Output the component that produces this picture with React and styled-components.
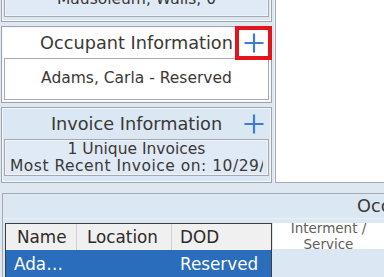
import React from 'react';
import styled, { createGlobalStyle } from 'styled-components';

const GlobalStyle = createGlobalStyle`
  *, *::before, *::after { box-sizing: border-box; }
  html, body { margin: 0; padding: 0; }
  body {
    background: #dfe7f0;
    font-family: "DejaVu Sans", "Liberation Sans", sans-serif;
    color: #3b3835;
    overflow: hidden;
  }
`;

const Screen = styled.div`
  width: 384px;
  height: 277px;
  overflow: hidden;
  display: flex;
  flex-direction: column;
  background: #dfe7f0;
`;

const TopArea = styled.div`
  flex: none;
  height: 193px;
  display: flex;
  overflow: hidden;
`;

const LeftCol = styled.div`
  flex: none;
  width: 272px;
  padding-left: 1px;
  display: flex;
  flex-direction: column;
  gap: 4px;
`;

const Card = styled.section`
  flex: none;
  border: 1px solid #9da4ac;
  box-shadow: inset 0 0 0 1px #f3f6fa;
  background: ${p => (p.$white ? '#ffffff' : '#dce7f4')};
  padding: 0 2px ${p => p.$pb}px 2px;
  margin-top: ${p => p.$mt || 0}px;
`;

const TitleRow = styled.div`
  height: 31px;
  display: grid;
  grid-template-columns: 1fr auto 1fr;
  align-items: center;
`;

const Title = styled.h2`
  grid-column: 2;
  margin: 0;
  font-weight: normal;
  font-size: 17.7px;
  white-space: nowrap;
  color: #3b3835;
`;

const PlusButton = styled.button`
  grid-column: 3;
  justify-self: end;
  width: 29px;
  height: 26px;
  margin-right: 1px;
  padding: 0;
  border: none;
  background: transparent;
  display: flex;
  align-items: center;
  justify-content: center;
  outline: ${p => (p.$highlight ? '4px solid #e5141c' : 'none')};
  outline-offset: 0;
`;

const InnerBox = styled.div`
  border: 1px solid #a7a9ac;
  box-shadow: inset 0 0 0 1px ${p => (p.$white ? '#ffffff' : '#eef3f9')};
  background: ${p => (p.$white ? '#ffffff' : '#e0eaf6')};
  height: ${p => p.$h}px;
  padding: ${p => p.$pad};
  display: flex;
  flex-direction: column;
  justify-content: ${p => p.$justify || 'center'};
  overflow: hidden;
`;

const Line = styled.div`
  font-size: 15.5px;
  line-height: ${p => p.$lh || 18}px;
  letter-spacing: ${p => p.$ls || 0}px;
  text-align: center;
  white-space: nowrap;
  overflow: hidden;
  color: #3b3835;
`;

const RightPanel = styled.div`
  flex: none;
  width: 109px;
  height: 183px;
  margin-left: 3px;
  background: #ffffff;
  border: 1px solid #a3aab2;
  border-top: none;
  border-right: none;
  box-shadow: -1px 0 0 #eef2f6;
`;

const BottomPanel = styled.div`
  flex: 1;
  margin-left: 2px;
  border-top: 1px solid #a3aab2;
  border-left: 1px solid #a3aab2;
  background: #dce7f4;
  display: flex;
  flex-direction: column;
`;

const PanelHeader = styled.div`
  height: 25px;
  padding-left: 354px;
  display: flex;
  align-items: center;
  font-size: 17.7px;
  white-space: nowrap;
  overflow: hidden;
  border-bottom: 1px solid #e9eff7;
`;

const GridRow = styled.div`
  margin-top: 4px;
  padding-left: 2px;
  display: flex;
  align-items: flex-start;
`;

const Table = styled.div`
  flex: none;
  width: 267px;
  border: 1px solid #3e3e3e;
  border-bottom: none;
  background: #ffffff;
`;

const Row = styled.div`
  display: grid;
  grid-template-columns: 71px 95px 1fr;
  height: ${p => p.$h}px;
  background: ${p => (p.$selected ? '#2a6dbd' : '#f0f0f0')};
  color: ${p => (p.$selected ? '#ffffff' : '#2e2b28')};
`;

const Cell = styled.div`
  display: flex;
  align-items: center;
  padding: 0 8px 0 ${p => p.$pl}px;
  font-size: 16.8px;
  white-space: nowrap;
  overflow: hidden;
  border-right: ${p => (p.$sep ? '1px solid #d2d2d2' : 'none')};
  min-width: 0;
`;

const Ellipsis = styled.span`
  overflow: hidden;
  text-overflow: ellipsis;
  white-space: nowrap;
`;

const ColumnHead = styled.div`
  flex: 1;
  margin-left: 1px;
  height: 26px;
  background: #ffffff;
  overflow: hidden;
  display: flex;
  flex-direction: column;
  align-items: center;
`;

const HeadText = styled.div`
  margin-top: -3px;
  font-size: 13.5px;
  line-height: 16px;
  color: #615e5a;
  text-align: center;
`;

const Plus = () => (
  <svg width="20" height="20" viewBox="0 0 20 20">
    <path d="M10 0.5V19.5M0.5 10H19.5" stroke="#3b7dcf" strokeWidth="2.2" fill="none" />
  </svg>
);

export default function App() {
  return (
    <>
      <GlobalStyle />
      <Screen>
        <TopArea>
          <LeftCol>
            <Card $mt={-22} $pb={4}>
              <InnerBox $h={38} $pad="0 4px 8px" $justify="flex-end">
                <Line>Mausoleum, Walls, 0</Line>
              </InnerBox>
            </Card>
            <Card $white $pb={2}>
              <TitleRow>
                <Title>Occupant Information</Title>
                <PlusButton $highlight aria-label="Add occupant">
                  <Plus />
                </PlusButton>
              </TitleRow>
              <InnerBox $white $h={42} $pad="0 4px 3px">
                <Line>Adams, Carla - Reserved</Line>
              </InnerBox>
            </Card>
            <Card $pb={6}>
              <TitleRow>
                <Title>Invoice Information</Title>
                <PlusButton aria-label="Add invoice">
                  <Plus />
                </PlusButton>
              </TitleRow>
              <InnerBox $h={37} $pad="0 5px 1px 5px" $justify="flex-start">
                <Line>1 Unique Invoices</Line>
                <Line $ls={0.5}>Most Recent Invoice on: 10/29/2024</Line>
              </InnerBox>
            </Card>
          </LeftCol>
          <RightPanel />
        </TopArea>
        <BottomPanel>
          <PanelHeader>Occupants</PanelHeader>
          <GridRow>
            <Table>
              <Row $h={26}>
                <Cell $pl={11} $sep>Name</Cell>
                <Cell $pl={10} $sep>Location</Cell>
                <Cell $pl={8}>DOD</Cell>
              </Row>
              <Row $h={28} $selected>
                <Cell $pl={8}><Ellipsis>Adams, Carla</Ellipsis></Cell>
                <Cell $pl={10}></Cell>
                <Cell $pl={8}>Reserved</Cell>
              </Row>
            </Table>
            <ColumnHead>
              <HeadText>Interment /<br />Service</HeadText>
            </ColumnHead>
          </GridRow>
        </BottomPanel>
      </Screen>
    </>
  );
}
